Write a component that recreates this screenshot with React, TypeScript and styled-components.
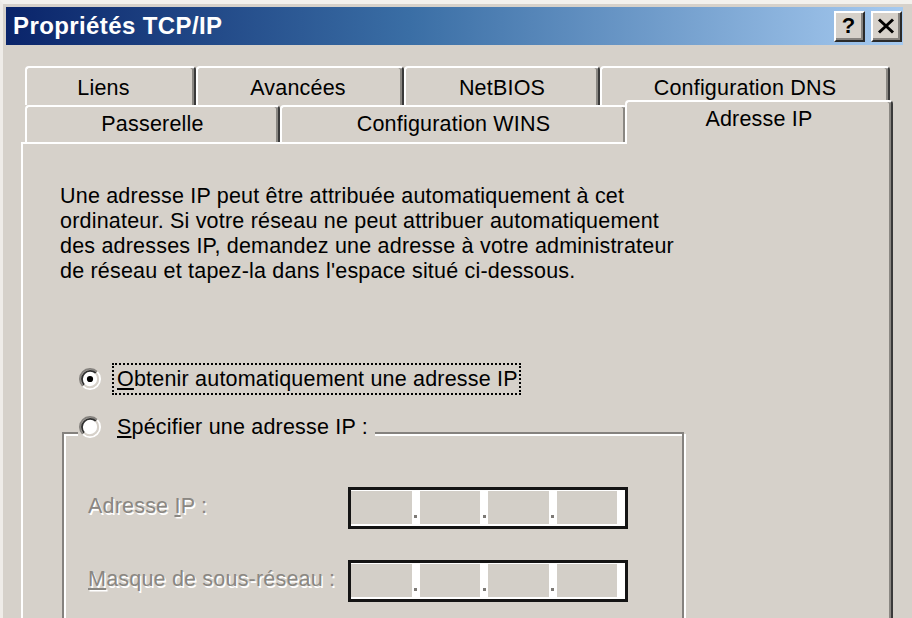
import React from "react";
import styled, { createGlobalStyle } from "styled-components";

const FACE = "#d6d1ca";
const UI = `"Liberation Sans", Arial, sans-serif`;

const Global = createGlobalStyle`
  html, body { margin: 0; padding: 0; background: #fff; overflow: hidden; }
  #root { width: 912px; height: 618px; }
  * { box-sizing: border-box; }
`;

const Window = styled.div`
  width: 912px;
  height: 618px;
  background: ${FACE};
  border-top: 4px solid #f3f1ed;
  border-left: 3px solid #efece8;
  padding: 3px 9px 0 3px;
  display: flex;
  flex-direction: column;
  overflow: hidden;
  font-family: ${UI};
  font-size: 21.5px;
  letter-spacing: 0.2px;
  color: #000;
`;

const TitleBar = styled.div`
  height: 38px;
  flex: none;
  display: flex;
  align-items: flex-start;
  justify-content: space-between;
  padding: 0 1px 0 7px;
  background: linear-gradient(90deg, #0a246a 0%, #3a6ea5 45%, #a6caf0 100%);
`;

const TitleText = styled.div`
  font-weight: bold;
  font-size: 24px;
  line-height: 38px;
  color: #fff;
  letter-spacing: 0.4px;
`;

const CaptionButtons = styled.div`
  display: flex;
  gap: 6px;
  margin-top: 4px;
`;

const CaptionButton = styled.div`
  width: 31px;
  height: 31px;
  background: ${FACE};
  border: 2px solid;
  border-color: #fff #2a2a2a #2a2a2a #fff;
  box-shadow: inset -2px -2px 0 #85827e;
  display: flex;
  align-items: center;
  justify-content: center;
  font-weight: bold;
  font-size: 22px;
  letter-spacing: 0;
  line-height: 1;
  padding: 0 2px 2px 0;
`;

const Body = styled.div`
  flex: 1;
  display: flex;
  flex-direction: column;
  padding: 21px 0 0 15px;
  min-height: 0;
`;

const TabControl = styled.div`
  width: 872px;
  flex: 1;
  display: flex;
  flex-direction: column;
  min-height: 0;
`;

const TabRow = styled.div<{ $h: number }>`
  display: flex;
  align-items: flex-start;
  height: ${(p) => p.$h}px;
  padding-left: 4px;
  flex: none;
`;

const Tab = styled.div<{ $w: number; $h: number; $pt?: number; $pr?: number }>`
  width: ${(p) => p.$w}px;
  height: ${(p) => p.$h}px;
  flex: none;
  border-top: 2px solid #fff;
  border-left: 2px solid #fff;
  border-right: 2px solid #3a3a3a;
  box-shadow: inset -2px 0 0 #8a8782;
  border-radius: 4px 4px 0 0;
  display: flex;
  align-items: center;
  justify-content: center;
  padding-top: ${(p) => p.$pt ?? 0}px;
  padding-right: ${(p) => p.$pr ?? 0}px;
  white-space: nowrap;
  background: ${FACE};
`;

const ActiveTab = styled(Tab)`
  margin-top: -5px;
  margin-left: -2px;
  position: relative;
  z-index: 1;
  padding-bottom: 8px;
`;

const Panel = styled.div`
  flex: 1;
  border-top: 2px solid #fff;
  border-left: 2px solid #fff;
  border-right: 2px solid #3a3a3a;
  box-shadow: inset -2px 0 0 #8a8782;
  padding: 0 0 0 37px;
  overflow: hidden;
  display: flex;
  flex-direction: column;
  align-items: flex-start;
`;

const Paragraph = styled.p`
  margin: 40px 0 0 0;
  line-height: 25px;
  white-space: nowrap;
`;

const RadioRow = styled.div`
  display: flex;
  align-items: center;
  gap: 11px;
  height: 32px;
  margin: 79px 0 0 19px;
`;

const FocusLabel = styled.div`
  border: 2px dotted #000;
  padding: 0 1px 0 3px;
  height: 32px;
  line-height: 28px;
  white-space: nowrap;
`;

const Key = styled.u`
  text-decoration-thickness: 2px;
  text-underline-offset: 2px;
`;

const GroupBox = styled.div`
  margin: 37px 0 0 2px;
  width: 622px;
  flex: none;
  height: 400px;
  border: 2px solid #85827e;
  box-shadow: inset 2px 2px 0 #fff, 2px 2px 0 #fff;
  padding-left: 24px;
`;

const GroupLegend = styled.div`
  display: flex;
  align-items: center;
  gap: 16px;
  width: fit-content;
  height: 26px;
  margin: -20px 0 0 -10px;
  padding: 0 7px 0 1px;
  background: ${FACE};
  line-height: 26px;
  white-space: nowrap;
`;

const FieldGrid = styled.div`
  display: grid;
  grid-template-columns: 260px 280px;
  grid-auto-rows: 42px;
  row-gap: 31px;
  align-items: center;
  margin-top: 47px;
`;

const DisabledLabel = styled.div`
  color: #8a8782;
  text-shadow: 1.5px 1.5px 0 #fff;
  white-space: nowrap;
  padding-bottom: 3px;
`;

const IpField = styled.div`
  height: 42px;
  border: 3px solid #141414;
  background: #fff;
  display: flex;
`;

const Octet = styled.div`
  flex: 1;
  background: #d3cfc8;
  margin: 1px 0 2px;
`;

const Separator = styled.div`
  width: 8px;
  display: flex;
  align-items: flex-end;
  justify-content: center;
  padding-bottom: 8px;
`;

const Dot = styled.span`
  width: 3px;
  height: 3px;
  background: #7d7a76;
`;

function Radio({ checked }: { checked?: boolean }) {
  return (
    <svg width="22" height="22" viewBox="0 0 12 12" style={{ flex: "none" }}>
      <circle cx="6" cy="6" r="4.2" fill="#fff" />
      <path d="M2.11 9.89 A5.5 5.5 0 0 1 9.89 2.11" fill="none" stroke="#85827e" strokeWidth="1" />
      <path d="M9.89 2.11 A5.5 5.5 0 0 1 2.11 9.89" fill="none" stroke="#fff" strokeWidth="1" />
      <path d="M2.82 9.18 A4.5 4.5 0 0 1 9.18 2.82" fill="none" stroke="#303030" strokeWidth="1" />
      <path d="M9.18 2.82 A4.5 4.5 0 0 1 2.82 9.18" fill="none" stroke={FACE} strokeWidth="1" />
      {checked && <circle cx="6" cy="6" r="1.7" fill="#000" />}
    </svg>
  );
}

function IpInput() {
  return (
    <IpField>
      {[0, 1, 2].map((i) => (
        <React.Fragment key={i}>
          <Octet />
          <Separator>
            <Dot />
          </Separator>
        </React.Fragment>
      ))}
      <Octet />
      <Separator />
    </IpField>
  );
}

export default function App() {
  return (
    <>
      <Global />
      <Window>
        <TitleBar>
          <TitleText>Propriétés TCP/IP</TitleText>
          <CaptionButtons>
            <CaptionButton>?</CaptionButton>
            <CaptionButton>
              <svg width="18" height="16" viewBox="0 0 18 16">
                <path d="M2 1.5 L16 14.5 M16 1.5 L2 14.5" stroke="#000" strokeWidth="3" />
              </svg>
            </CaptionButton>
          </CaptionButtons>
        </TitleBar>
        <Body>
          <TabControl>
            <TabRow $h={39}>
              <Tab $w={171} $h={39} $pt={3} $pr={14}>Liens</Tab>
              <Tab $w={208} $h={39} $pt={3} $pr={4}>Avancées</Tab>
              <Tab $w={196} $h={39} $pt={3}>NetBIOS</Tab>
              <Tab $w={290} $h={39} $pt={3}>Configuration DNS</Tab>
            </TabRow>
            <TabRow $h={37}>
              <Tab $w={255} $h={37}>Passerelle</Tab>
              <Tab $w={347} $h={37}>Configuration WINS</Tab>
              <ActiveTab $w={268} $h={44}>Adresse IP</ActiveTab>
            </TabRow>
            <Panel>
              <Paragraph>
                Une adresse IP peut être attribuée automatiquement à cet
                <br />
                ordinateur. Si votre réseau ne peut attribuer automatiquement
                <br />
                des adresses IP, demandez une adresse à votre administrateur
                <br />
                de réseau et tapez-la dans l'espace situé ci-dessous.
              </Paragraph>
              <RadioRow>
                <Radio checked />
                <FocusLabel>
                  <Key>O</Key>btenir automatiquement une adresse IP
                </FocusLabel>
              </RadioRow>
              <GroupBox>
                <GroupLegend>
                  <Radio />
                  <span>
                    <Key>S</Key>pécifier une adresse IP :
                  </span>
                </GroupLegend>
                <FieldGrid>
                  <DisabledLabel>
                    Adresse <Key>I</Key>P :
                  </DisabledLabel>
                  <IpInput />
                  <DisabledLabel>
                    <Key>M</Key>asque de sous-réseau :
                  </DisabledLabel>
                  <IpInput />
                </FieldGrid>
              </GroupBox>
            </Panel>
          </TabControl>
        </Body>
      </Window>
    </>
  );
}
